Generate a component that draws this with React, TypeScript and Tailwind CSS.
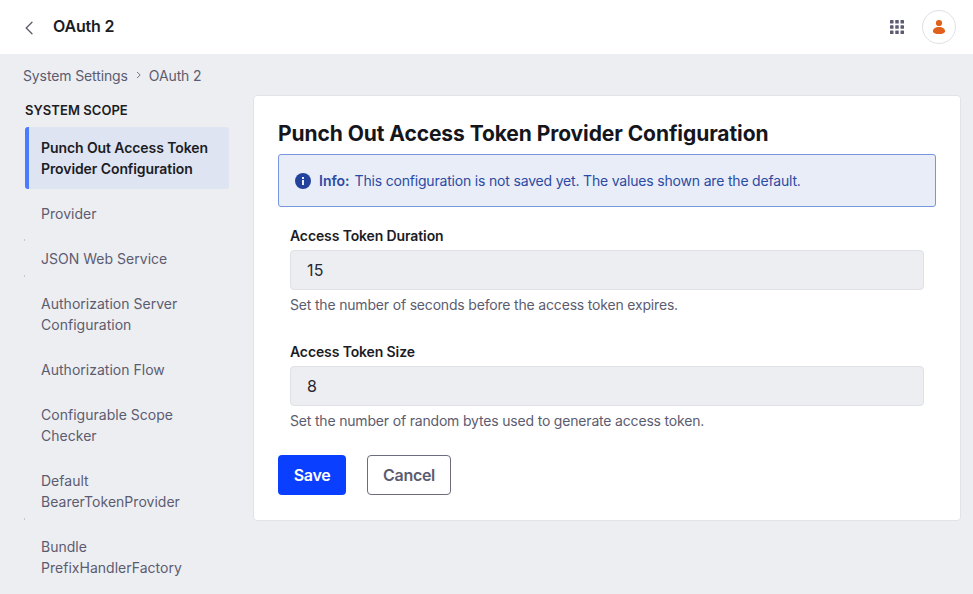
import React from "react";

type Item = { lines: string[]; mark?: string };

const items: Item[] = [
  { lines: ["Provider"] },
  { lines: ["JSON Web Service"], mark: "-top-[9px]" },
  { lines: ["Authorization Server", "Configuration"], mark: "-top-[18px]" },
  { lines: ["Authorization Flow"] },
  { lines: ["Configurable Scope", "Checker"] },
  { lines: ["Default", "BearerTokenProvider"] },
  { lines: ["Bundle", "PrefixHandlerFactory"], mark: "-top-[18px]" },
];

function Field({ label, value, help }: { label: string; value: string; help: string }) {
  return (
    <div className="h-[116px] px-3">
      <div className="text-[14px] leading-[21px] font-semibold tracking-[-0.12px] text-[#1c1c24]">{label}</div>
      <div className="mt-[4px] flex h-10 items-center rounded border border-[#e0e0e7] bg-[#edeef2] px-4 text-[16px] tracking-[0.3px] text-[#272833]">{value}</div>
      <div className="mt-[4px] text-[14px] leading-[21px] tracking-[-0.18px] text-[#5c5c70]">{help}</div>
    </div>
  );
}

export default function App() {
  return (
    <div className="h-[594px] w-[973px] overflow-hidden bg-[#edeef2] font-['Inter',sans-serif] text-[#1c1c24]">
      <header className="flex h-[54px] items-center bg-white pr-[17px] pl-[24px]">
        <svg className="mt-[2px]" width="10" height="14" viewBox="0 0 10 14" fill="none" stroke="#5c5c70" strokeWidth="1.3" strokeLinecap="round"><path d="M8 1.2 2.2 7 8 12.8" /></svg>
        <h1 className="-mt-[2px] ml-[19px] text-[16px] font-semibold tracking-[-0.2px]">OAuth 2</h1>
        <svg className="ml-auto" width="14" height="14" fill="#5c5c70">
          {[0, 5.25, 10.5].map((y) => [0, 5.25, 10.5].map((x) => <rect key={`${x}-${y}`} x={x} y={y} width="3.5" height="3.5" rx=".5" />))}
        </svg>
        <div className="ml-[18px] flex size-[34px] items-center justify-center rounded-full border border-[#e0e0e6]">
          <svg width="14" height="16" viewBox="0 0 14 16" fill="#e0601c"><circle cx="7" cy="4" r="3.1" /><path d="M1 12.2C1 9.8 3.4 8 7 8s6 1.8 6 4.2c0 1.9-2.2 2.8-6 2.8s-6-.9-6-2.8z" /></svg>
        </div>
      </header>
      <nav className="flex h-[41px] items-center pt-px pl-[23px] text-[14px] tracking-[-0.12px] text-[#5c5c70]">
        <span>System Settings</span>
        <svg className="mr-[7px] ml-[8px]" width="6" height="8" fill="none" stroke="#77778a"><path d="m1 1 3.2 3L1 7" /></svg>
        <span>OAuth 2</span>
      </nav>
      <main className="flex">
        <aside className="w-[253px] pt-[5px] pl-[25px]">
          <h2 className="h-[27px] text-[13px] leading-[20px] font-semibold tracking-[0.05px]">SYSTEM SCOPE</h2>
          <div className="h-[62px] w-[204px] rounded-[3px] border-l-4 border-[#4b7bff] bg-[#dfe4f2] pt-[10px] pl-3 text-[14px] leading-[21px] font-semibold tracking-[-0.09px]">
            Punch Out Access Token<br />Provider Configuration
          </div>
          <div className="mt-[15px] flex flex-col gap-6 pl-4 text-[14px] leading-[21px] tracking-[0.02px] text-[#5c5c70]">
            {items.map(({ lines, mark }) => (
              <div key={lines[0]} className="relative -top-px">
                {mark && <span className={`absolute -left-[17px] h-[2px] w-px bg-[#c6c6d0] ${mark}`} />}
                {lines.map((t) => <div key={t}>{t}</div>)}
              </div>
            ))}
          </div>
        </aside>
        <section className="h-[426px] w-[708px] rounded-[4px] border border-[#e2e2e8] bg-white px-6 pt-[24px]">
          <h2 className="text-[21px] leading-[28px] font-bold tracking-[-0.08px] whitespace-nowrap text-[#15151c]">Punch Out Access Token Provider Configuration</h2>
          <div className="mt-[6px] mb-[18px] flex h-[53px] items-center rounded-[3px] border border-[#7697dd] bg-[#e9edf8] px-4 text-[14px] tracking-[-0.185px] text-[#2b4ba3]">
            <svg className="mr-2" width="16" height="16"><circle cx="8" cy="8" r="8" fill="#23429c" /><path d="M7 7h2v5H7zM7 4h2v2H7z" fill="#e9edf8" /></svg>
            <b className="mr-[5px] font-semibold tracking-normal">Info:</b>This configuration is not saved yet. The values shown are the default.
          </div>
          <Field label="Access Token Duration" value="15" help="Set the number of seconds before the access token expires." />
          <Field label="Access Token Size" value="8" help="Set the number of random bytes used to generate access token." />
          <div className="-mt-[2px] flex gap-[21px] text-[16px] font-semibold tracking-[-0.3px]">
            <button className="h-10 w-[68px] rounded bg-[#0b3fff] text-white">Save</button>
            <button className="h-10 w-[84px] rounded border border-[#6b6c7e] text-[#5c5c70]">Cancel</button>
          </div>
        </section>
      </main>
    </div>
  );
}
